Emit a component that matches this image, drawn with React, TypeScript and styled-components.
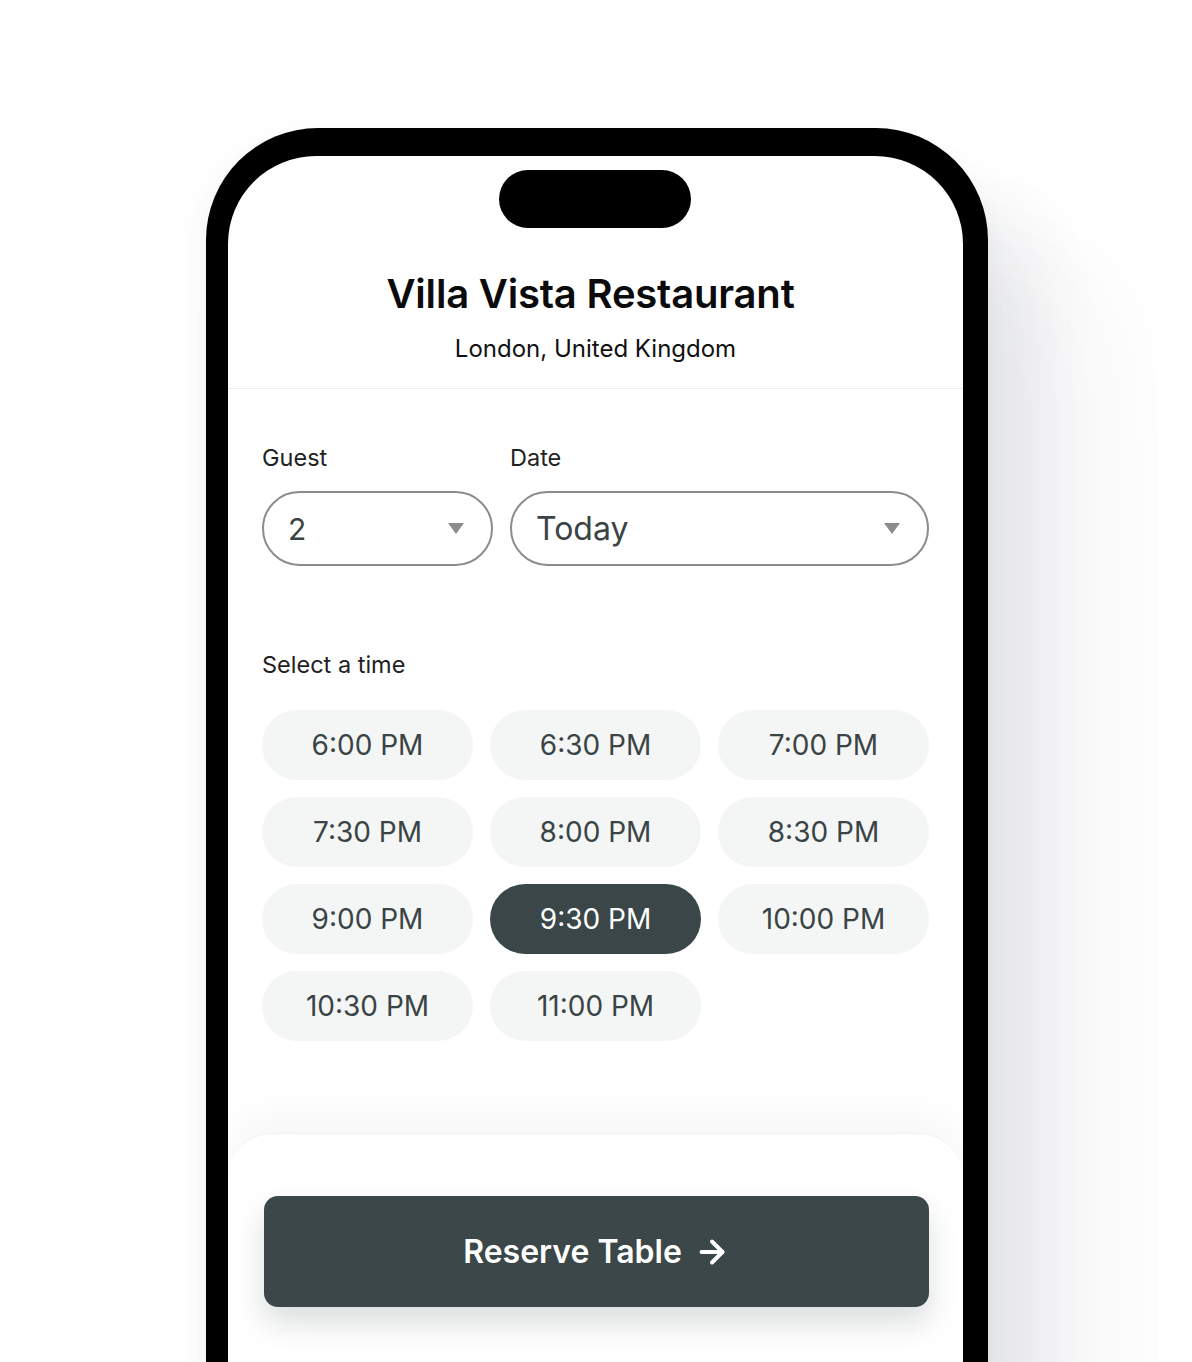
import React from 'react'
import styled, { createGlobalStyle } from 'styled-components'
import { ArrowRight } from 'lucide-react'

const GlobalStyle = createGlobalStyle`
  html, body {
    margin: 0;
    padding: 0;
    background: #ffffff;
    font-family: Inter, "Noto Sans", "Liberation Sans", sans-serif;
    -webkit-font-smoothing: antialiased;
  }
  * { box-sizing: border-box; }
`

const Page = styled.div`
  width: 1158px;
  height: 1362px;
  overflow: hidden;
  background: #ffffff;
  padding: 128px 0 0 206px;
`

const Phone = styled.div`
  width: 782px;
  height: 1300px;
  background: #000;
  border-radius: 112px 112px 0 0;
  padding: 28px 25px 0 22px;
  box-shadow: 50px 70px 70px rgba(40, 55, 75, 0.09), 120px 120px 120px rgba(40, 55, 75, 0.04),
    -6px 10px 30px rgba(40, 55, 75, 0.05);
`

const Screen = styled.div`
  height: 100%;
  background: #ffffff;
  border-radius: 88px 88px 0 0;
  display: flex;
  flex-direction: column;
  overflow: hidden;
`

const Island = styled.div`
  align-self: center;
  width: 192px;
  height: 58px;
  margin-top: 14px;
  margin-right: 2px;
  border-radius: 29px;
  background: #000;
`

const Header = styled.header`
  display: flex;
  flex-direction: column;
  align-items: center;
  padding: 42px 0 24px;
  border-bottom: 1.5px solid #ececec;
`

const Title = styled.h1`
  margin: 0;
  font-size: 40px;
  line-height: 48px;
  font-weight: 600;
  color: #0b0b0b;
  letter-spacing: -0.2px;
  margin-right: 10px;
`

const Subtitle = styled.p`
  margin: 16px 0 0;
  font-size: 24px;
  line-height: 30px;
  color: #111;
  font-weight: 400;
`

const Body = styled.div`
  padding: 55px 33px 0 34px;
  display: flex;
  flex-direction: column;
`

const FieldRow = styled.div`
  display: flex;
  gap: 17px;
`

const Field = styled.div<{ $w: number }>`
  width: ${(p) => p.$w}px;
  display: flex;
  flex-direction: column;
`

const Label = styled.span`
  font-size: 23.5px;
  line-height: 28px;
  color: #222;
  font-weight: 400;
  margin-bottom: 19px;
`

const Select = styled.div<{ $size: number }>`
  height: 75px;
  border: 2px solid #8c8c8c;
  border-radius: 38px;
  display: flex;
  align-items: center;
  justify-content: space-between;
  padding: 0 26px 0 24px;
  font-size: ${(p) => p.$size}px;
  color: #3a4445;
`

const SectionLabel = styled(Label)`
  margin-top: 85px;
  margin-bottom: 31px;
`

const TimeGrid = styled.div`
  display: grid;
  grid-template-columns: repeat(3, 211px);
  column-gap: 17px;
  row-gap: 17px;
`

const TimeSlot = styled.button<{ $active?: boolean }>`
  height: 70px;
  border: none;
  border-radius: 35px;
  background: ${(p) => (p.$active ? '#3a4647' : '#f4f5f5')};
  color: ${(p) => (p.$active ? '#ffffff' : '#3a4445')};
  font-family: inherit;
  font-size: 28px;
  font-weight: 400;
  cursor: pointer;
`

const BottomCard = styled.div`
  margin-top: 92px;
  flex: 1;
  background: #ffffff;
  border-radius: 44px 44px 0 0;
  box-shadow: 0 -18px 40px rgba(0, 0, 0, 0.035);
  border-top: 1px solid #f1f1f1;
  padding: 62px 34px 0 36px;
`

const ReserveButton = styled.button`
  width: 100%;
  height: 111px;
  border: none;
  border-radius: 14px;
  background: #3b4748;
  color: #ffffff;
  font-family: inherit;
  font-size: 32px;
  font-weight: 600;
  display: flex;
  align-items: center;
  justify-content: center;
  gap: 12px;
  box-shadow: 0 16px 30px rgba(30, 45, 50, 0.16);
  cursor: pointer;
`

const Caret = () => (
  <svg width="18" height="13" viewBox="0 0 18 13">
    <path d="M1 1 L17 1 L9 12 Z" fill="#8c8c8c" />
  </svg>
)

const times = [
  '6:00 PM',
  '6:30 PM',
  '7:00 PM',
  '7:30 PM',
  '8:00 PM',
  '8:30 PM',
  '9:00 PM',
  '9:30 PM',
  '10:00 PM',
  '10:30 PM',
  '11:00 PM',
]

const App = () => {
  const selected = '9:30 PM'
  return (
    <>
      <GlobalStyle />
      <Page>
        <Phone>
          <Screen>
            <Island />
            <Header>
              <Title>Villa Vista Restaurant</Title>
              <Subtitle>London, United Kingdom</Subtitle>
            </Header>
            <Body>
              <FieldRow>
                <Field $w={231}>
                  <Label>Guest</Label>
                  <Select $size={30}>
                    <span>2</span>
                    <Caret />
                  </Select>
                </Field>
                <Field $w={419}>
                  <Label>Date</Label>
                  <Select $size={32}>
                    <span>Today</span>
                    <Caret />
                  </Select>
                </Field>
              </FieldRow>
              <SectionLabel>Select a time</SectionLabel>
              <TimeGrid>
                {times.map((t) => (
                  <TimeSlot key={t} $active={t === selected}>
                    {t}
                  </TimeSlot>
                ))}
              </TimeGrid>
            </Body>
            <BottomCard>
              <ReserveButton>
                Reserve Table
                <ArrowRight size={36} strokeWidth={2.6} />
              </ReserveButton>
            </BottomCard>
          </Screen>
        </Phone>
      </Page>
    </>
  )
}

export default App
